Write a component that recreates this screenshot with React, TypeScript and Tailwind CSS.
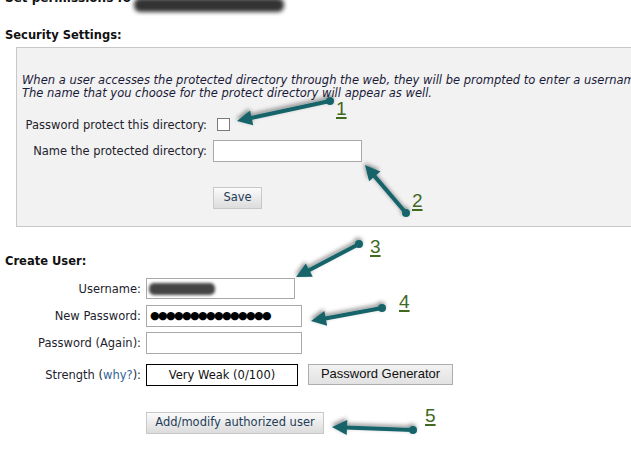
import React from "react";

type Arrow = { x1: number; y1: number; x2: number; y2: number };

const arrows: Arrow[] = [
  { x1: 330, y1: 101, x2: 237, y2: 121 },
  { x1: 406, y1: 213, x2: 365, y2: 165 },
  { x1: 359, y1: 244, x2: 296, y2: 277 },
  { x1: 382, y1: 308, x2: 311, y2: 321 },
  { x1: 413, y1: 430, x2: 332, y2: 427 },
];

function ArrowShape({ a }: { a: Arrow }) {
  const dx = a.x2 - a.x1;
  const dy = a.y2 - a.y1;
  const len = Math.sqrt(dx * dx + dy * dy);
  const ux = dx / len;
  const uy = dy / len;
  const hl = 15;
  const hw = 7.5;
  const bx = a.x2 - ux * hl;
  const by = a.y2 - uy * hl;
  const px = -uy;
  const py = ux;
  const pts = `${a.x2},${a.y2} ${bx + px * hw},${by + py * hw} ${bx - px * hw},${by - py * hw}`;
  return (
    <g filter="url(#sh)">
      <line x1={a.x1} y1={a.y1} x2={bx + ux * 2} y2={by + uy * 2} stroke="#14646b" strokeWidth={4} strokeLinecap="round" />
      <polygon points={pts} fill="#14646b" />
      <circle cx={a.x1} cy={a.y1} r={4} fill="#14646b" />
    </g>
  );
}

const nums = [
  { n: "1", left: 336, top: 99 },
  { n: "2", left: 412, top: 191 },
  { n: "3", left: 370, top: 237 },
  { n: "4", left: 399, top: 292 },
  { n: "5", left: 425, top: 406 },
];

function GrayButton({ children, w }: { children: React.ReactNode; w: string }) {
  return (
    <div
      className={`${w} h-[22px] flex items-center justify-center border border-[#c8c8c8] bg-gradient-to-b from-[#fbfbfb] to-[#dcdcdc] text-[#1f3d58] text-[11.5px] leading-none`}
    >
      {children}
    </div>
  );
}

export default function App() {
  return (
    <div className="relative w-[631px] h-[456px] overflow-hidden bg-white font-['Verdana','DejaVu_Sans',sans-serif] text-[11.5px] leading-[14px] text-[#1e1e2e]">
      {/* header */}
      <div className="mt-[-9px] ml-[5px] h-[14px] flex items-center font-bold text-[12px] text-[#111]">
        <span>Set permissions fo</span>
        <span className="ml-[3px] mt-[14px] inline-block w-[150px] h-[14px] rounded-[6px] bg-[#333] blur-[2px]" />
      </div>

      <div className="ml-[5px] mt-[23px] font-bold text-[#111]">Security Settings:</div>

      {/* security box */}
      <div className="ml-[16px] mt-[5px] w-[640px] h-[180px] border border-[#c8c8c8] bg-[#f2f2f2]">
        <p className="mt-[26px] ml-[5px] italic leading-[13px] whitespace-nowrap text-[#1a1a3a]">
          When a user accesses the protected directory through the web, they will be prompted to enter a username
          <br />
          The name that you choose for the protect directory will appear as well.
        </p>
        <div className="mt-[18px] h-[13px] flex items-center">
          <div className="w-[190px] text-right">Password protect this directory:</div>
          <div className="ml-[10px] w-[13px] h-[13px] border border-[#7a7a7a] bg-white" />
        </div>
        <div className="mt-[9px] h-[22px] flex items-center">
          <div className="w-[190px] text-right">Name the protected directory:</div>
          <div className="ml-[6px] w-[149px] h-[22px] border border-[#a9a9a9] bg-white" />
        </div>
        <div className="mt-[25px] ml-[196px]">
          <GrayButton w="w-[49px]">Save</GrayButton>
        </div>
      </div>

      <div className="ml-[5px] mt-[27px] font-bold text-[#111]">Create User:</div>

      <div className="mt-[10px] h-[21px] flex items-center">
        <div className="w-[141px] text-right">Username:</div>
        <div className="relative ml-[5px] w-[149px] h-[21px] border border-[#a9a9a9] bg-white">
          <span className="absolute left-[2px] top-[4px] w-[66px] h-[12px] rounded-[5px] bg-[#444] blur-[1.5px]" />
        </div>
      </div>
      <div className="mt-[6px] h-[22px] flex items-center">
        <div className="w-[141px] text-right">New Password:</div>
        <div className="ml-[5px] w-[156px] h-[22px] border border-[#a9a9a9] bg-white flex items-center pl-[3px] text-[11px] tracking-[-1.6px] text-black">
          ●●●●●●●●●●●●●●●
        </div>
      </div>
      <div className="mt-[5px] h-[22px] flex items-center">
        <div className="w-[141px] text-right">Password (Again):</div>
        <div className="ml-[5px] w-[156px] h-[22px] border border-[#a9a9a9] bg-white" />
      </div>
      <div className="mt-[10px] h-[22px] flex items-center">
        <div className="w-[141px] text-right">
          Strength (<span className="text-[#2f6399]">why?</span>):
        </div>
        <div className="ml-[5px] w-[152px] h-[22px] border border-black bg-white flex items-center justify-center text-[#111]">
          Very Weak (0/100)
        </div>
        <div className="ml-[10px] -mt-[2px] w-[145px] h-[21px] border border-[#adadad] bg-gradient-to-b from-[#f2f2f2] to-[#e2e2e2] flex items-center justify-center font-['Liberation_Sans',Arial,sans-serif] text-[13px] text-[#111]">
          Password Generator
        </div>
      </div>
      <div className="mt-[26px] ml-[146px]">
        <GrayButton w="w-[178px]">Add/modify authorized user</GrayButton>
      </div>

      {/* annotations */}
      <svg className="absolute inset-0" width={631} height={456}>
        <defs>
          <filter id="sh" x="-20%" y="-50%" width="140%" height="200%">
            <feDropShadow dx={-1} dy={-2} stdDeviation={2} floodColor="#000" floodOpacity={0.45} />
          </filter>
        </defs>
        {arrows.map((a, i) => (
          <ArrowShape key={i} a={a} />
        ))}
      </svg>
      {nums.map((n) => (
        <span
          key={n.n}
          className="absolute font-['Liberation_Sans',Arial,sans-serif] text-[19px] leading-[19px] text-[#3f6a1f] underline decoration-[1.5px] underline-offset-[2px]"
          style={{ left: n.left, top: n.top }}
        >
          {n.n}
        </span>
      ))}
    </div>
  );
}
